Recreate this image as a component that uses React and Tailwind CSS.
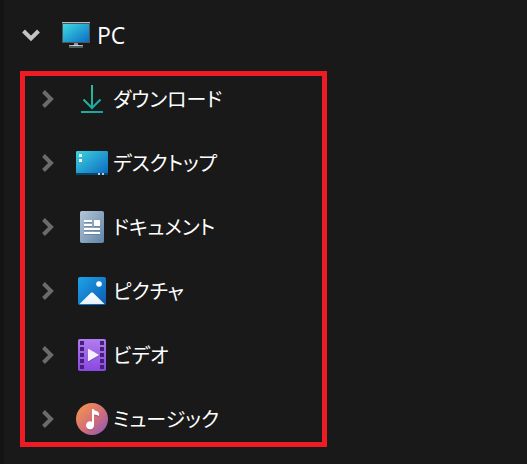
import { useState } from 'react';

const MonitorIcon = () => (
    <svg className="w-8 h-8" viewBox="0 0 32 32" aria-hidden="true">
        <defs>
            <linearGradient id="monitor" x1="0" y1="0" x2="1" y2="1">
                <stop offset="0" stopColor="#3ddbe2" />
                <stop offset="1" stopColor="#0b6cc4" />
            </linearGradient>
        </defs>
        <rect x="2" y="3" width="28" height="21" fill="#4b555c" />
        <rect x="2" y="3" width="28" height="1" fill="#b4bcc2" />
        <rect x="3" y="5" width="26" height="18" fill="url(#monitor)" />
        <rect x="14" y="24" width="4" height="2" fill="#8b979e" />
        <rect x="9" y="26" width="14" height="1" fill="#aab4ba" />
        <rect x="9" y="27" width="14" height="2" fill="#4f5b63" />
        <rect x="13" y="26" width="6" height="1" fill="#d0d6da" />
    </svg>
);

const DownloadIcon = () => (
    <svg className="w-8 h-8" viewBox="0 0 32 32" aria-hidden="true">
        <defs>
            <linearGradient id="download" gradientUnits="userSpaceOnUse" x1="6" y1="2" x2="26" y2="30">
                <stop offset="0" stopColor="#2fc48d" />
                <stop offset="1" stopColor="#10a3a8" />
            </linearGradient>
        </defs>
        <path d="M16 2V25M7.5 16.5L16 25L24.5 16.5M5 29H27" fill="none" stroke="url(#download)" strokeWidth="2" />
    </svg>
);

const DesktopIcon = () => (
    <svg className="w-8 h-8" viewBox="0 0 32 32" aria-hidden="true">
        <defs>
            <linearGradient id="desktop" x1="0" y1="0" x2="1" y2="1">
                <stop offset="0" stopColor="#3bd5dd" />
                <stop offset="1" stopColor="#0c65c2" />
            </linearGradient>
        </defs>
        <rect x="0" y="4" width="32" height="24" rx="1.2" fill="url(#desktop)" />
        <path d="M0 26H32V27Q32 28 31 28H1Q0 28 0 27Z" fill="#0b4668" />
        <path d="M3 7H6V10H3ZM3 12H6V15H3Z" fill="#fff" />
        <path d="M22 26H24V28H22ZM26 26H28V28H26Z" fill="#b9cbd8" />
    </svg>
);

const DocumentIcon = () => (
    <svg className="w-8 h-8" viewBox="0 0 32 32" aria-hidden="true">
        <defs>
            <linearGradient id="document" x1="0" y1="0" x2="1" y2="1">
                <stop offset="0" stopColor="#b4c6d8" />
                <stop offset="1" stopColor="#6084a8" />
            </linearGradient>
        </defs>
        <rect x="4" y="0" width="24" height="32" rx="1.8" fill="url(#document)" />
        <path d="M8 11H16M8 15H16M8 19H24M8 23H24" stroke="#4f7092" strokeWidth="2" opacity=".5" />
        <rect x="18" y="9.5" width="6" height="6.5" rx=".5" fill="#4f7092" opacity=".5" />
        <path d="M8 10H16M8 14H16M8 18H24M8 22H24" stroke="#fff" strokeWidth="2" />
        <rect x="18" y="9" width="6" height="6" rx=".5" fill="#fff" />
    </svg>
);

const PictureIcon = () => (
    <svg className="w-8 h-8" viewBox="0 0 32 32" aria-hidden="true">
        <defs>
            <linearGradient id="picture" x1="0" y1="0" x2="1" y2="1">
                <stop offset="0" stopColor="#20a2e8" />
                <stop offset="1" stopColor="#0a5cb4" />
            </linearGradient>
            <linearGradient id="mountain" x1="0" y1="0" x2="0" y2="1">
                <stop offset="0" stopColor="#fff" />
                <stop offset="1" stopColor="#e3f1fb" />
            </linearGradient>
        </defs>
        <rect x="2" y="2" width="28" height="28" rx="2" fill="url(#picture)" />
        <path d="M3.5 29L15 17.8Q16 17 17 17.8L28.5 29Z" fill="url(#mountain)" />
        <circle cx="23" cy="9" r="2.8" fill="#fff" />
    </svg>
);

const VideoIcon = () => (
    <svg className="w-8 h-8" viewBox="0 0 32 32" aria-hidden="true">
        <defs>
            <linearGradient id="video" x1="0" y1="0" x2="0" y2="1">
                <stop offset="0" stopColor="#b17cf0" />
                <stop offset="1" stopColor="#8a48e0" />
            </linearGradient>
        </defs>
        <rect x="2" y="0" width="28" height="32" rx="1.8" fill="url(#video)" />
        <path
            d="M4 2H8V6H4ZM4 8H8V12H4ZM4 14H8V18H4ZM4 20H8V24H4ZM4 26H8V30H4ZM24 2H28V6H24ZM24 8H28V12H24ZM24 14H28V18H24ZM24 20H28V24H24ZM24 26H28V30H24Z"
            fill="#45217c"
        />
        <path d="M12.5 10.8L23 17L12.5 23.2Z" fill="#5a2da0" opacity=".5" />
        <path d="M12 10.5Q12 9.6 12.8 10L22.3 15.5Q23 16 22.3 16.5L12.8 22Q12 22.4 12 21.5Z" fill="#f4f0fa" />
    </svg>
);

const MusicIcon = () => (
    <svg className="w-8 h-8" viewBox="0 0 32 32" aria-hidden="true">
        <defs>
            <linearGradient id="music" x1="0.1" y1="0.1" x2="0.9" y2="0.9">
                <stop offset="0" stopColor="#f39250" />
                <stop offset="0.55" stopColor="#d36e78" />
                <stop offset="1" stopColor="#975bb0" />
            </linearGradient>
        </defs>
        <circle cx="16" cy="16" r="16" fill="url(#music)" />
        <path d="M16 7.5H18Q18.3 9 21 9.4Q23 10 23 12V14.5Q21.5 13 18 12.8V23.5A4 4 0 1 1 16 20.2Z" fill="#8d4660" opacity=".4" />
        <path d="M16 6.5Q16 6 16.5 6H17.5Q18.2 8 21 8.3Q23 8.7 23 11V13Q21.5 11.8 18 11.5V22.3A4 4 0 1 1 16 18.9Z" fill="#fff" />
    </svg>
);

const folders = [
    { name: 'ダウンロード', icon: DownloadIcon },
    { name: 'デスクトップ', icon: DesktopIcon },
    { name: 'ドキュメント', icon: DocumentIcon },
    { name: 'ピクチャ', icon: PictureIcon },
    { name: 'ビデオ', icon: VideoIcon },
    { name: 'ミュージック', icon: MusicIcon },
];

const Chevron = ({ open, label, onClick }) => (
    <button
        type="button"
        aria-label={label}
        aria-expanded={open}
        onClick={onClick}
        className={open ? 'shrink-0 text-[#c3c3c3]' : 'shrink-0 text-[#6b6b6b]'}
    >
        <svg className="w-5 h-5" viewBox="0 0 20 20" fill="none" stroke="currentColor" strokeWidth="4">
            <path d={open ? 'M1.5 6L9 13.5L16.5 6' : 'M5.5 2.5L13 10L5.5 17.5'} />
        </svg>
    </button>
);

const App = () => {
    const [open, setOpen] = useState(true);

    return (
        <nav className="min-h-screen bg-[#191919] border-l-4 border-[#131313] pt-[3px] text-white">
            <div className="flex items-center h-16 pl-[18px]">
                <Chevron open={open} label="PC" onClick={() => setOpen(!open)} />
                <span className="ml-[18px]"><MonitorIcon /></span>
                <span className="ml-[5px] font-['Open_Sans','Noto_Sans',sans-serif] text-[23px] leading-8">PC</span>
            </div>

            {/* Highlighted folders */}
            {open && (
                <ul className="mt-1 ml-4 mr-[200px] flex flex-col gap-[18px] border-5 border-[#ed1c24] pl-[13px]">
                    {folders.map(({ name, icon: Icon }) => (
                        <li key={name} className="flex items-center h-[46px]">
                            <Chevron open={false} label={name} />
                            <span className="ml-[18px]"><Icon /></span>
                            <span className="ml-[5px] whitespace-nowrap font-['Noto_Sans_CJK_JP',sans-serif] text-[20px] leading-8 [font-feature-settings:'palt']">
                                {name}
                            </span>
                        </li>
                    ))}
                </ul>
            )}
        </nav>
    );
};

export default App;
